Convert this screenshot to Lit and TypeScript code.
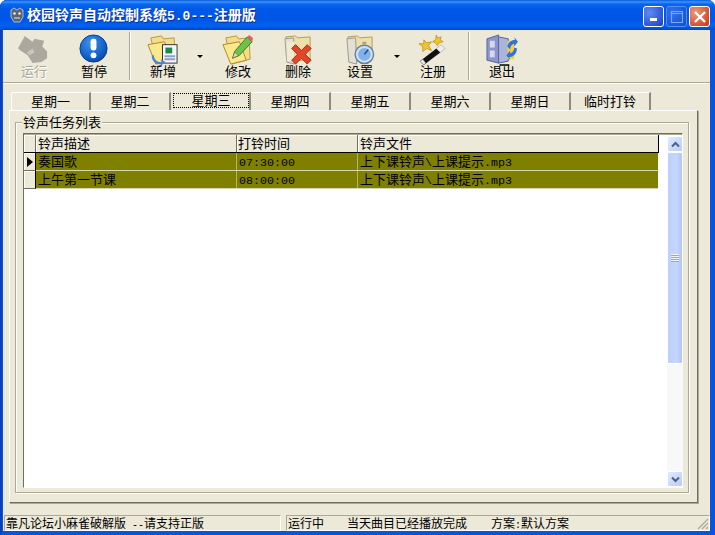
import { LitElement, html, css, svg } from "lit";
import { customElement } from "lit/decorators.js";

const folder = svg`<path d="M4 4 L15 2 L17 5 L28 4 L29 26 L10 31 Z" fill="#f3dc8c" stroke="#b59a3e"/><path d="M1 11 L18 8 L25 27 L9 31 Z" fill="#fce88c" stroke="#a98a2e"/>`;
const greyFolder = svg`<path d="M4 3 L14 2 L16 4 L29 3 L29 26 L6 29 Z" fill="#efdfa8" stroke="#b59a5a"/><path d="M3 5 L12 4 L13 31 L5 29 Z" fill="#e2e0d2" stroke="#9c9a8c"/>`;

const icons: Record<string, unknown> = {
  run: svg`<path d="M7 2 L0 15 L4 18 L10 22 L15 30 L24 29 L30 25 L30 18 L25 13 L27 7 L17 5 L15 8 Z" fill="#aba99e"/><path d="M9 19 L15 15 L17 19 L12 22 Z" fill="#c9c7bb"/>`,
  pause: svg`<defs><radialGradient id="pb" cx=".4" cy=".3" r=".8"><stop offset="0" stop-color="#3d95ea"/><stop offset=".7" stop-color="#0f5cc4"/><stop offset="1" stop-color="#073f98"/></radialGradient></defs><circle cx="16" cy="15" r="14" fill="url(#pb)" stroke="#0a3a8c"/><rect x="13" y="5" width="6" height="12" rx="2.5" fill="#fff"/><circle cx="16" cy="22" r="3" fill="#fff"/>`,
  add: svg`${folder}<rect x="16" y="11" width="15" height="19" fill="#f4f6fa" stroke="#333"/><rect x="19" y="14" width="7" height="6" fill="#1a8a4a"/><path d="M18 23 H29 M18 26 H29" stroke="#8aa0c8" stroke-width="2"/><path d="M7 22 A7 7 0 0 0 15 29 L14 26 L19 29 L14 33 L14 31 A8 8 0 0 1 5 22 Z" fill="#4f7fd8"/>`,
  edit: svg`${folder}<path d="M11 25 L13 18 L26 3 L31 8 L18 22 Z" fill="#6cc24a" stroke="#357a20"/><path d="M26 3 L28 1 L32 4 L31 8 Z" fill="#e8605a"/><path d="M11 25 L13 19 L17 22 Z" fill="#f3d9a8" stroke="#555" stroke-width=".5"/>`,
  del: svg`${greyFolder}<rect x="5" y="8" width="8" height="20" fill="#f0ead0"/><path d="M10 15 L14 11 L20 17 L26 11 L30 15 L24 21 L30 27 L26 31 L20 25 L14 31 L10 27 L16 21 Z" fill="#e2452a" stroke="#a62c12"/>`,
  set: svg`${greyFolder}<circle cx="21" cy="21" r="9.5" fill="#cfe0f4" stroke="#68809e" stroke-width="1.5"/><circle cx="21" cy="21" r="6.5" fill="#7fb2e8"/><path d="M21 21 L25 16" stroke="#244a80" stroke-width="1.5"/><rect x="19" y="8" width="4" height="3" fill="#a5a59a"/>`,
  reg: svg`<path d="M3 28 L20 15 L24 19 L7 32 Z" fill="#111"/><path d="M3 28 L6 26 L9 30 L7 32 Z" fill="#e8e8e8" stroke="#777" stroke-width=".5"/><path d="M20 15 L25 11 L29 15 L24 19 Z" fill="#eee" stroke="#888" stroke-width=".5"/><path d="M7 6 L10 9 L15 8 L12 12 L15 17 L10 15 L6 18 L6 13 L2 10 L7 10 Z" fill="#f2c230" stroke="#b58a10" stroke-width=".7"/><path d="M20 1 L21 4 L25 3 L24 6 L27 8 L23 9 L21 12 L19 9 L16 8 L19 6 Z" fill="#f2c230" stroke="#b58a10" stroke-width=".7"/>`,
  exit: svg`<path d="M1 5 L13 1 L13 30 L1 27 Z" fill="#8b97cc" stroke="#5a638f"/><path d="M13 3 L23 5 L23 28 L13 30 Z" fill="#aab4de" stroke="#5a638f"/><rect x="4" y="7" width="5" height="7" fill="#d5daf0"/><rect x="4" y="17" width="5" height="7" fill="#d5daf0"/><rect x="22" y="7" width="7" height="19" fill="#f2cf45"/><path d="M22 13 A9 9 0 0 1 30 6 L29 3 L33 8 L29 13 L29 10 A6 6 0 0 0 25 16 Z M32 15 A9 9 0 0 1 24 24 L25 27 L21 22 L25 17 L25 20 A6 6 0 0 0 29 14 Z" fill="#2f74da"/><path d="M14 31 H24 V33 H14 Z" fill="#333"/>`,
};

type Tool = { key: string; label: string; disabled?: boolean; arrow?: string; sepAfter?: boolean; shift?: boolean };
const tools: Tool[] = [
  { key: "run", label: "运行", disabled: true },
  { key: "pause", label: "暂停", sepAfter: true },
  { key: "add", label: "新增", arrow: "wide" },
  { key: "edit", label: "修改" },
  { key: "del", label: "删除" },
  { key: "set", label: "设置", arrow: "tight", shift: true },
  { key: "reg", label: "注册", sepAfter: true },
  { key: "exit", label: "退出" },
];
const tabs = ["星期一", "星期二", "星期三", "星期四", "星期五", "星期六", "星期日", "临时打铃"];
const rows = [
  { name: "奏国歌", time: "07:30:00", current: true },
  { name: "上午第一节课", time: "08:00:00", current: false },
];

@customElement("app-root")
export class AppRoot extends LitElement {
  static styles = css`
    :host {
      display: block; width: 715px; height: 535px; overflow: hidden; background: #fff;
      font: 13px/16px "Noto Sans CJK SC", sans-serif; color: #000;
    }
    .window {
      height: 535px; box-sizing: border-box; display: flex; flex-direction: column;
      background: #0855dd; border-radius: 7px 7px 0 0; overflow: hidden;
      padding: 0 5px 4px 3px; box-shadow: inset 2px 0 0 #0a3fc0;
    }
    .title {
      flex: none; height: 30px; margin: 0 -5px 0 -3px; display: flex; align-items: center; padding: 0 5px 0 9px; gap: 2px;
      background: linear-gradient(#0a5ad8 0, #3a93ff 2px, #0a66ee 4px, #0058e8 9px, #0056e6 20px, #0262f2 26px, #0046c8 30px);
    }
    .title svg { flex: none; }
    .title-text {
      flex: 1; color: #fff; font-size: 14px; font-weight: 700; text-shadow: 1px 1px 0 #0a2f90; white-space: nowrap;
    }
    .title-text .lat { font: 700 13px "Liberation Mono", monospace; }
    .wbtns { display: flex; gap: 2px; margin-top: 3px; }
    .wbtn {
      width: 19px; height: 19px; border: 1px solid #fff; border-radius: 3px;
      display: flex; align-items: center; justify-content: center;
      background: radial-gradient(circle at 30% 30%, #5f8bf0, #2b56d6 70%, #1c3fb0);
    }
    .wbtn.off { opacity: .55; border-color: #9db8f0; }
    .wbtn.close { background: radial-gradient(circle at 30% 30%, #ec9a7c, #d8502e 70%, #b8381c); }
    .body { flex: 1; display: flex; flex-direction: column; background: #ece9d8; min-height: 0; }
    .toolbar {
      flex: none; height: 52px; display: flex; align-items: flex-start;
      border-bottom: 1px solid #aca899; box-shadow: 0 1px 0 #fff; padding-left: 1px;
    }
    .tool {
      width: 60px; flex: none; display: flex; flex-direction: column; align-items: center; padding-top: 4px;
    }
    .tool.shift { margin-left: 2px; }
    .tool svg { display: block; width: 32px; height: 32px; }
    .tool span { margin-top: -3px; line-height: 16px; }
    .tool.off span { color: #aca899; text-shadow: 1px 1px 0 #fff; }
    .arrow {
      flex: none; width: 0; height: 0; margin: 25px 5px 0 4px; border: 3px solid transparent;
      border-top: 3px solid #000; border-bottom: 0;
    }
    .arrow.tight { margin-right: 3px; }
    .sep { flex: none; width: 1px; height: 48px; background: #aca899; box-shadow: 1px 0 0 #fff; margin: 2px 3px 0 5px; }
    .tabs { flex: none; display: flex; height: 18px; margin: 9px 0 0 8px; }
    .tab {
      width: 80px; flex: none; box-sizing: border-box; text-align: center; line-height: 15px;
      border-top: 1px solid #fff; border-right: 2px solid #8d8b7c;
    }
    .tab:first-child { border-left: 1px solid #fff; border-radius: 2px 0 0 0; }
    .tab.active { border-top-color: transparent; }
    .tab.active span {
      display: block; margin: 0 0 1px 2px; height: 15px; line-height: 13px; outline: 1px dotted #000; outline-offset: -1px;
    }
    .panel {
      flex: 1; min-height: 0; margin: 0 12px 12px 6px; display: flex; box-sizing: border-box;
      border: 1px solid; border-color: #fff #716f64 #716f64 #fff; padding: 11px 8px 9px 5px;
      box-shadow: 1px 1px 0 #aca899;
    }
    .group {
      flex: 1; position: relative; display: flex; min-width: 0; box-sizing: border-box; padding: 10px 5px 4px 7px;
      border: 1px solid #aca899; box-shadow: inset 1px 1px 0 #fff, 1px 1px 0 #fff;
    }
    .legend {
      position: absolute; left: 6px; top: -9px; background: #ece9d8; padding: 0 1px; line-height: 15px;
    }
    .grid {
      flex: 1; min-width: 0; display: flex; background: #fff;
      border: 1px solid; border-color: #716f64 #fff #fff #716f64; box-shadow: inset 0 1px 0 #aca899;
      padding: 1px 0 0 0;
    }
    .table { flex: none; width: 635px; display: flex; flex-direction: column; }
    .row { display: grid; grid-template-columns: 12px 201px 121px 300px; }
    .row.head { height: 17px; background: #ece9d8; border-bottom: 1px solid #000; border-right: 1px solid #000; }
    .row.head > div { border-right: 1px solid #716f64; box-shadow: inset 1px 1px 0 #fff; padding-left: 1px; line-height: 16px; }
    .row.head > div:last-child { border-right: 0; padding-left: 2px; }
    .row.head > div:nth-child(2) { padding-left: 2px; }
    .row.data { height: 17px; background: #808000; margin-right: 1px; border-bottom: 1px solid #d8d8b0; }
    .row.data > div { border-right: 1px solid #b5b560; padding-left: 2px; line-height: 16px; white-space: nowrap; }
    .row.data > div:last-child { border-right: 0; }
    .row.data > .ind {
      background: #ece9d8; padding: 0; border-right: 1px solid #000; box-shadow: inset 1px 1px 0 #fff;
      border-bottom: 1px solid #716f64; margin-bottom: -1px; display: flex; align-items: center; justify-content: center;
    }
    .tri { width: 0; height: 0; border: 5px solid transparent; border-left: 6px solid #000; border-right: 0; }
    .lat { font: 11.67px "Liberation Mono", monospace; }
    .scroll {
      flex: none; width: 16px; margin: 1px 0 0 8px; display: flex; flex-direction: column; background: #f7f8fa;
    }
    .sbtn {
      flex: none; height: 16px; box-sizing: border-box; border: 1px solid #fff; border-radius: 2px;
      background: linear-gradient(135deg, #e2ebfe, #b9ccf8); display: flex; align-items: center; justify-content: center;
    }
    .thumb {
      flex: none; height: 212px; box-sizing: border-box; border: 1px solid #fff; border-radius: 2px;
      background: linear-gradient(90deg, #bcd0fb, #c6d6fc 60%, #afc5f7);
      display: flex; align-items: center; justify-content: center;
    }
    .grip { width: 8px; height: 8px; background: repeating-linear-gradient(#eef3fe 0 1px, #8da8e2 1px 2px); }
    .track { flex: 1; }
    .status { flex: none; height: 16px; display: flex; font-size: 12px; line-height: 14px; white-space: nowrap; }
    .spanel { box-sizing: border-box; border: 1px solid; border-color: #aca899 #fff #fff #aca899; }
    .spanel.a { width: 277px; padding-left: 1px; margin-right: 5px; margin-left: 1px; }
    .spanel.b { flex: 1; display: flex; padding-left: 1px; position: relative; }
    .spanel .lat { font-size: 10px; white-space: pre; }
    .s1 { width: 59px; flex: none; }
    .s2 { width: 144px; flex: none; }
    .grip-corner { position: absolute; right: 0; bottom: 0; }
  `;

  private fileName() {
    return html`上下课铃声<span class="lat">\\</span>上课提示<span class="lat">.mp3</span>`;
  }

  render() {
    return html`
      <div class="window">
        <div class="title">
          <svg width="16" height="16" viewBox="0 0 16 16"><path d="M2 3 L5 1 L8 3 L11 1 L14 3 L14 10 L11 15 L5 15 L2 10 Z" fill="#59646e" stroke="#c4d0dc" stroke-width=".8"/><circle cx="5.5" cy="6.5" r="1.3" fill="#e6eef4"/><circle cx="10.5" cy="6.5" r="1.3" fill="#e6eef4"/><path d="M5 11 H11" stroke="#e6eef4"/></svg>
          <div class="title-text">校园铃声自动控制系统<span class="lat">5.0---</span>注册版</div>
          <div class="wbtns">
            <div class="wbtn"><svg width="10" height="10" viewBox="0 0 10 10"><rect x="1" y="6" width="7" height="3" fill="#fff"/></svg></div>
            <div class="wbtn off"><svg width="14" height="14" viewBox="0 0 14 14"><path d="M1.5 1.5 H12.5 V12.5 H1.5 Z M1.5 3.5 H12.5" fill="none" stroke="#dfe8ff" stroke-width="1.2"/></svg></div>
            <div class="wbtn close"><svg width="14" height="14" viewBox="0 0 14 14"><path d="M2 2 L12 12 M12 2 L2 12" stroke="#fff" stroke-width="2.4"/></svg></div>
          </div>
        </div>
        <div class="body">
          <div class="toolbar">
            ${tools.map(t => html`
              <div class="tool ${t.disabled ? "off" : ""} ${t.shift ? "shift" : ""}">
                <svg viewBox="0 0 33 33">${icons[t.key]}</svg>
                <span>${t.label}</span>
              </div>
              ${t.arrow ? html`<div class="arrow ${t.arrow}"></div>` : ""}
              ${t.sepAfter ? html`<div class="sep"></div>` : ""}
            `)}
          </div>
          <div class="tabs">
            ${tabs.map((t, i) => html`<div class="tab ${i === 2 ? "active" : ""}"><span>${t}</span></div>`)}
          </div>
          <div class="panel">
            <div class="group">
              <div class="legend">铃声任务列表</div>
              <div class="grid">
                <div class="table">
                  <div class="row head"><div></div><div>铃声描述</div><div>打铃时间</div><div>铃声文件</div></div>
                  ${rows.map(r => html`
                    <div class="row data">
                      <div class="ind">${r.current ? html`<div class="tri"></div>` : ""}</div>
                      <div>${r.name}</div>
                      <div><span class="lat">${r.time}</span></div>
                      <div>${this.fileName()}</div>
                    </div>`)}
                </div>
                <div class="scroll">
                  <div class="sbtn"><svg width="9" height="7" viewBox="0 0 9 7"><path d="M1 5.5 L4.5 2 L8 5.5" fill="none" stroke="#4d6185" stroke-width="2"/></svg></div>
                  <div class="thumb"><div class="grip"></div></div>
                  <div class="track"></div>
                  <div class="sbtn"><svg width="9" height="7" viewBox="0 0 9 7"><path d="M1 1.5 L4.5 5 L8 1.5" fill="none" stroke="#4d6185" stroke-width="2"/></svg></div>
                </div>
              </div>
            </div>
          </div>
          <div class="status">
            <div class="spanel a">靠凡论坛小麻雀破解版<span class="lat"> --</span>请支持正版</div>
            <div class="spanel b">
              <span class="s1">运行中</span>
              <span class="s2">当天曲目已经播放完成</span>
              <span>方案<span class="lat">:</span>默认方案</span>
              <svg class="grip-corner" width="13" height="13" viewBox="0 0 13 13"><path d="M12 2 L2 12 M12 6 L6 12 M12 10 L10 12" stroke="#aca899" stroke-width="1.2"/></svg>
            </div>
          </div>
        </div>
      </div>
    `;
  }
}
